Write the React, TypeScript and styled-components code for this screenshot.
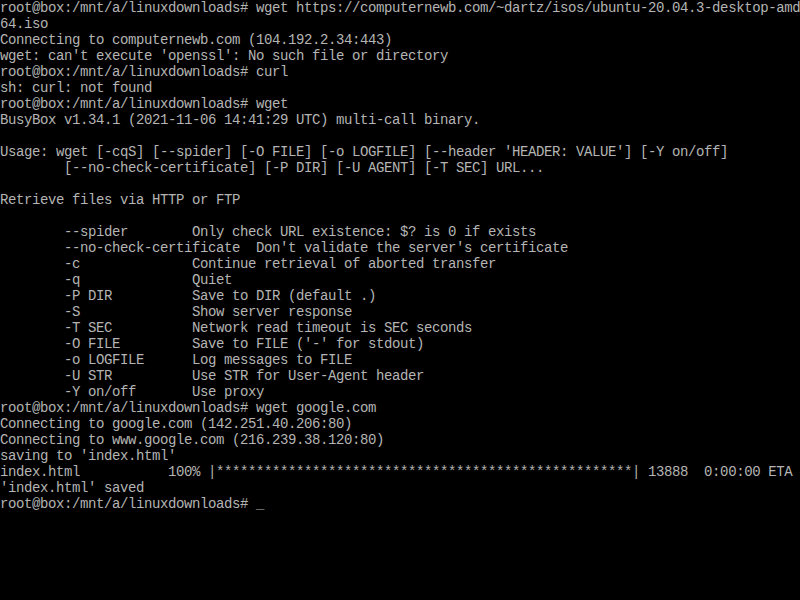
import React from "react";
import styled, { createGlobalStyle } from "styled-components";

const Global = createGlobalStyle`
  html, body {
    margin: 0;
    padding: 0;
    background: #000;
    width: 800px;
    height: 600px;
    overflow: hidden;
  }
`;

const Screen = styled.div`
  width: 800px;
  height: 600px;
  background: #000;
  color: #b4b4b4;
  font-family: "Liberation Mono", "DejaVu Sans Mono", monospace;
  font-size: 14px;
  letter-spacing: -0.4px;
  line-height: 16px;
  box-sizing: border-box;
  overflow: hidden;
`;

const Line = styled.div`
  height: 16px;
  white-space: pre;
  overflow: hidden;
`;

const Cursor = styled.span`
  color: #b4b4b4;
`;

const bar = "*".repeat(52);

const lines: string[] = [
  "root@box:/mnt/a/linuxdownloads# wget https://computernewb.com/~dartz/isos/ubuntu-20.04.3-desktop-amd",
  "64.iso",
  "Connecting to computernewb.com (104.192.2.34:443)",
  "wget: can't execute 'openssl': No such file or directory",
  "root@box:/mnt/a/linuxdownloads# curl",
  "sh: curl: not found",
  "root@box:/mnt/a/linuxdownloads# wget",
  "BusyBox v1.34.1 (2021-11-06 14:41:29 UTC) multi-call binary.",
  "",
  "Usage: wget [-cqS] [--spider] [-O FILE] [-o LOGFILE] [--header 'HEADER: VALUE'] [-Y on/off]",
  "        [--no-check-certificate] [-P DIR] [-U AGENT] [-T SEC] URL...",
  "",
  "Retrieve files via HTTP or FTP",
  "",
  "        --spider        Only check URL existence: $? is 0 if exists",
  "        --no-check-certificate  Don't validate the server's certificate",
  "        -c              Continue retrieval of aborted transfer",
  "        -q              Quiet",
  "        -P DIR          Save to DIR (default .)",
  "        -S              Show server response",
  "        -T SEC          Network read timeout is SEC seconds",
  "        -O FILE         Save to FILE ('-' for stdout)",
  "        -o LOGFILE      Log messages to FILE",
  "        -U STR          Use STR for User-Agent header",
  "        -Y on/off       Use proxy",
  "root@box:/mnt/a/linuxdownloads# wget google.com",
  "Connecting to google.com (142.251.40.206:80)",
  "Connecting to www.google.com (216.239.38.120:80)",
  "saving to 'index.html'",
  `index.html           100% |${bar}| 13888  0:00:00 ETA`,
  "'index.html' saved",
];

export default function App() {
  return (
    <>
      <Global />
      <Screen>
        {lines.map((l, i) => (
          <Line key={i}>{l}</Line>
        ))}
        <Line>
          {"root@box:/mnt/a/linuxdownloads# "}
          <Cursor>_</Cursor>
        </Line>
      </Screen>
    </>
  );
}
